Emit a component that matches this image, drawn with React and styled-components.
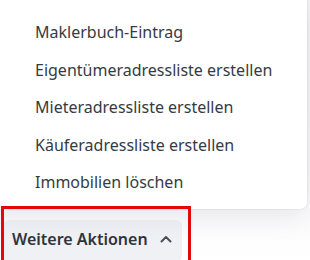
import React from "react";
import styled, { createGlobalStyle } from "styled-components";

const Global = createGlobalStyle`
  html, body { margin: 0; padding: 0; background: #ffffff; }
  body { font-family: "Noto Sans", "Open Sans", sans-serif; }
  #root { width: 310px; height: 260px; overflow: hidden; }
`;

const Page = styled.div`
  position: relative;
  width: 310px;
  height: 260px;
  overflow: hidden;
  background: linear-gradient(180deg, #f1f1f5 0%, #f6f6f8 60%, #ffffff 100%);
  display: flex;
  flex-direction: column;
`;

const Menu = styled.ul`
  list-style: none;
  margin: 0 0 0 -10px;
  padding: 13.5px 0 8px;
  width: 317px;
  height: 209px;
  box-sizing: border-box;
  background: #ffffff;
  border-radius: 0 0 7px 7px;
  box-shadow: 0 0 0 1px rgba(0, 0, 0, 0.04), 0 6px 28px rgba(40, 40, 80, 0.10);
  position: relative;
  z-index: 1;
`;

const Item = styled.li`
  height: 37.5px;
  display: flex;
  align-items: center;
  padding-left: 45px;
  font-size: 16px;
  color: #353b43;
  white-space: nowrap;
`;

const Footer = styled.div`
  flex: 1;
  display: flex;
  align-items: flex-start;
  padding: 11px 0 0 3px;
`;

const ActionButton = styled.button`
  display: flex;
  align-items: center;
  gap: 12px;
  height: 42px;
  padding: 0 10px 4px 9px;
  border: none;
  border-radius: 6px;
  background: #f0f1f5;
  font-family: "Noto Sans", "Open Sans", sans-serif;
  font-size: 16px;
  font-weight: 600;
  color: #2f353d;
  cursor: pointer;
  box-sizing: border-box;
  width: 179px;
`;

const Highlight = styled.div`
  position: absolute;
  left: 1px;
  top: 206px;
  width: 190px;
  height: 60px;
  box-sizing: border-box;
  border: 3px solid #e3080e;
  z-index: 2;
  pointer-events: none;
`;

const Chevron = () => (
  <svg width="12" height="8" viewBox="0 0 12 8" fill="none">
    <path d="M1.5 6.5L6 2L10.5 6.5" stroke="#4a5059" strokeWidth="2" strokeLinecap="round" strokeLinejoin="round" />
  </svg>
);

const items = [
  "Maklerbuch-Eintrag",
  "Eigentümeradressliste erstellen",
  "Mieteradressliste erstellen",
  "Käuferadressliste erstellen",
  "Immobilien löschen",
];

export default function App() {
  return (
    <Page>
      <Global />
      <Menu>
        {items.map((t) => (
          <Item key={t}>{t}</Item>
        ))}
      </Menu>
      <Footer>
        <ActionButton>
          Weitere Aktionen
          <Chevron />
        </ActionButton>
      </Footer>
      <Highlight />
    </Page>
  );
}
